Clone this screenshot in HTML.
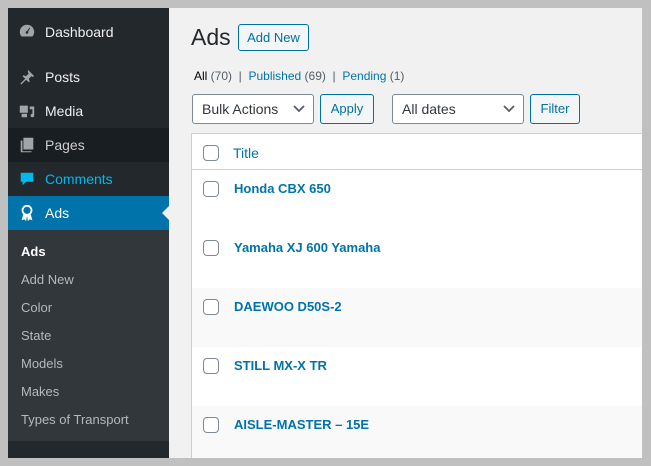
<!DOCTYPE html>
<html><head><style>
*{margin:0;padding:0;box-sizing:border-box}
body{width:651px;height:466px;background:#c0c0c0;font-family:"Liberation Sans",sans-serif;position:relative;overflow:hidden}
#frame{position:absolute;left:8px;top:8px;width:634px;height:450px;background:#f1f1f1;overflow:hidden}
#side{position:absolute;left:0;top:0;width:161px;height:450px;background:#23282d}
.mi{position:absolute;left:0;width:161px;height:34px;color:#eee;font-size:14px;line-height:34px;padding-left:37px}
.ic{position:absolute;left:10px;top:8px;width:18px;height:18px}
.sub{position:absolute;left:0;top:222px;width:161px;height:211px;background:#32373c}
.sub div{position:absolute;left:13px;font-size:13px;color:#b4b9be}
.btn{position:absolute;border:1px solid #0071a1;border-radius:3px;color:#0071a1;font-size:13px;text-align:center;background:#f3f5f6}
.sel{position:absolute;border:1px solid #7e8993;border-radius:3px;background:#fff;font-size:14px;color:#32373c;padding-left:9px}
.sel svg{position:absolute;right:8px;top:10px}
#tbl{position:absolute;left:183px;top:125px;width:460px;height:330px;background:#fff;border:1px solid #ccd0d4}
.row{position:absolute;left:0;width:460px;height:59px}
.cb{position:absolute;left:11px;width:16px;height:16px;border:1px solid #7e8993;border-radius:4px;background:#fff}
.t{position:absolute;left:42px;font-size:13px;font-weight:bold;color:#0073aa}
</style></head><body>
<div id="frame">
<div id="side">
 <div class="mi" style="top:7px">
  <svg class="ic" viewBox="0 0 20 20"><path fill="#a0a5aa" d="M10 2a8 8 0 0 0-8 8c0 2 .7 3.7 2 5h12a8 8 0 0 0 2-5 8 8 0 0 0-8-8zm0 10a1.5 1.5 0 1 1 0-3l3-4 .6.5-2.4 4.2A1.5 1.5 0 0 1 10 12z"/></svg>Dashboard</div>
 <div class="mi" style="top:52px"><svg class="ic" viewBox="0 0 20 20"><path fill="#a0a5aa" d="M11 2l7 7-2 1-1-1-3 3 1 3-1 1-3-3-5 5-1 0 0-1 5-5-3-3 1-1 3 1 3-3-1-1z"/></svg>Posts</div>
 <div class="mi" style="top:86px"><svg class="ic" viewBox="0 0 20 20"><path fill="#a0a5aa" d="M2 4h9v8H2zM13 5h5v10a2 2 0 1 1-2-2V8h-3zM4 13h6v4H4z"/></svg>Media</div>
 <div class="mi" style="top:120px;background:#191e23;color:#ccc"><svg class="ic" viewBox="0 0 20 20"><path fill="#a0a5aa" d="M6 2h11v13H6zM3 5h2v12h10v1H3z"/></svg>Pages</div>
 <div class="mi" style="top:154px;color:#00b9eb"><svg class="ic" viewBox="0 0 20 20"><path fill="#00b9eb" d="M3 3h14v10H9l-4 4v-4H3z"/></svg>Comments</div>
 <div class="mi" style="top:188px;background:#0073aa;color:#fff"><svg class="ic" viewBox="0 0 20 20"><circle cx="10" cy="7" r="5" fill="none" stroke="#fff" stroke-width="2"/><path fill="#fff" d="M6 11l-2 7 3-1 2 2 1-6zM14 11l2 7-3-1-2 2-1-6z"/></svg>Ads
  <div style="position:absolute;right:0;top:10px;border:7px solid transparent;border-right-color:#f1f1f1;border-left:0"></div></div>
 <div class="sub">
  <div style="top:14px;color:#fff;font-weight:bold">Ads</div>
  <div style="top:42px">Add New</div>
  <div style="top:70px">Color</div>
  <div style="top:98px">State</div>
  <div style="top:126px">Models</div>
  <div style="top:154px">Makes</div>
  <div style="top:182px">Types of Transport</div>
 </div>
</div>
<div style="position:absolute;left:183px;top:16px;font-size:23px;color:#23282d">Ads</div>
<div class="btn" style="left:230px;top:16px;width:71px;height:27px;line-height:25px">Add New</div>
<div style="position:absolute;left:186px;top:61px;font-size:12px;color:#555d66"><span style="color:#000">All</span> (70) &nbsp;|&nbsp; <span style="color:#0073aa">Published</span> (69) &nbsp;|&nbsp; <span style="color:#0073aa">Pending</span> (1)</div>
<div class="sel" style="left:184px;top:86px;width:122px;height:30px;line-height:28px">Bulk Actions<svg width="12" height="8" viewBox="0 0 12 8"><path d="M1 1l5 5 5-5" stroke="#555d66" stroke-width="1.8" fill="none"/></svg></div>
<div class="btn" style="left:312px;top:86px;width:54px;height:30px;line-height:28px">Apply</div>
<div class="sel" style="left:384px;top:86px;width:132px;height:30px;line-height:28px">All dates<svg width="12" height="8" viewBox="0 0 12 8"><path d="M1 1l5 5 5-5" stroke="#555d66" stroke-width="1.8" fill="none"/></svg></div>
<div class="btn" style="left:522px;top:86px;width:50px;height:30px;line-height:28px">Filter</div>
<div id="tbl">
 <div class="row" style="top:0;height:36px;border-bottom:1px solid #ccd0d4"><div class="cb" style="top:11px"></div><div class="t" style="top:11px;left:41px;font-weight:normal;font-size:14px">Title</div></div>
 <div class="row" style="top:36px;background:#fff"><div class="cb" style="top:11px"></div><div class="t" style="top:11px">Honda CBX 650</div></div>
 <div class="row" style="top:95px;background:#fff"><div class="cb" style="top:11px"></div><div class="t" style="top:11px">Yamaha XJ 600 Yamaha</div></div>
 <div class="row" style="top:154px;background:#f9f9f9"><div class="cb" style="top:11px"></div><div class="t" style="top:11px">DAEWOO D50S-2</div></div>
 <div class="row" style="top:213px;background:#fff"><div class="cb" style="top:11px"></div><div class="t" style="top:11px">STILL MX-X TR</div></div>
 <div class="row" style="top:272px;background:#f9f9f9"><div class="cb" style="top:11px"></div><div class="t" style="top:11px">AISLE-MASTER – 15E</div></div>
</div>
</div>
</body></html>
